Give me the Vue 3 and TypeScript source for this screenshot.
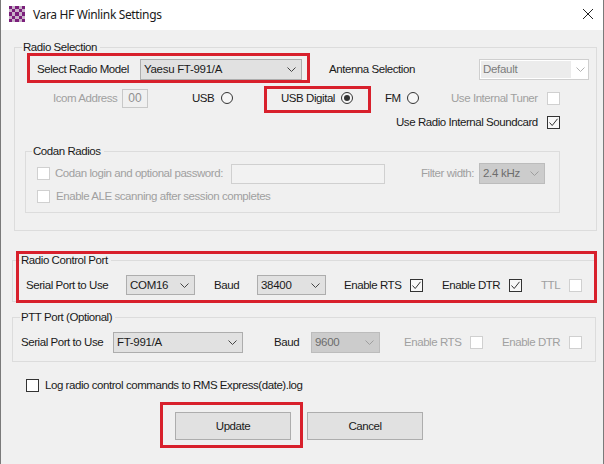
<script setup lang="ts">
const checker = Array.from({ length: 25 }, (_, i) => i).filter((i) => i % 2 === 0)
</script>

<template>
  <div class="win">
    <header class="title">
      <svg class="logo" width="16" height="16" viewBox="0 0 5 5" shape-rendering="crispEdges">
        <rect width="5" height="5" fill="#c9b4c9" />
        <rect v-for="i in checker" :key="i" :x="i % 5" :y="Math.floor(i / 5)" width="1" height="1" fill="#7b1f7b" />
      </svg>
      <span class="title-text">Vara HF Winlink Settings</span>
      <svg class="close" width="12" height="12" viewBox="0 0 12 12"><path d="M1 1 11 11M11 1 1 11" stroke="#222" stroke-width="1" fill="none" /></svg>
    </header>

    <section class="group radio-group">
      <span class="legend lg-radio">Radio Selection</span>
      <div class="row r-model">
        <span class="w-103">Select Radio Model</span>
        <div class="combo w-162"><span>Yaesu FT-991/A</span><svg class="chev" width="9" height="5" viewBox="0 0 9 5"><path d="M.5.5 4.5 4.500 8.500.5" /></svg></div>
        <span class="w-150 ml-27">Antenna Selection</span>
        <div class="combo-light"><span class="cl-text">Default</span><svg class="chev" width="9" height="5" viewBox="0 0 9 5"><path d="M.5.5 4.5 4.500 8.500.5" /></svg></div>
      </div>
      <div class="row r-mode">
        <span class="off w-69">Icom Address</span>
        <div class="addr">00</div>
        <span class="w-29 ml-44">USB</span><i class="radio"></i>
        <span class="w-60 ml-48">USB Digital</span><i class="radio on"></i>
        <span class="w-22 ml-32">FM</span><i class="radio"></i>
        <span class="off w-96 ml-32">Use Internal Tuner</span><i class="check"></i>
      </div>
      <div class="row r-sound">
        <span class="w-151">Use Radio Internal Soundcard</span>
        <i class="check on"><svg width="11" height="11" viewBox="0 0 11 11"><path d="M1.500 5.500 4.200 8.500 9.500 1.800" /></svg></i>
      </div>

      <section class="group codan">
        <span class="legend lg-codan">Codan Radios</span>
        <div class="row r-codan1">
          <i class="check"></i>
          <span class="off w-176 ml-5">Codan login and optional password:</span>
          <div class="pw"></div>
          <span class="off w-58 ml-36">Filter width:</span>
          <div class="combo combo-off w-66"><span>2.4 kHz</span><svg class="chev" width="9" height="5" viewBox="0 0 9 5"><path d="M.5.5 4.5 4.500 8.500.5" /></svg></div>
        </div>
        <div class="row r-codan2">
          <i class="check"></i>
          <span class="off ml-6">Enable ALE scanning after session completes</span>
        </div>
      </section>
    </section>

    <section class="group port control">
      <span class="legend lg-port">Radio Control Port</span>
      <div class="row r-control">
        <span class="w-100">Serial Port to Use</span>
        <div class="combo w-69"><span>COM16</span><svg class="chev" width="9" height="5" viewBox="0 0 9 5"><path d="M.5.5 4.5 4.500 8.500.5" /></svg></div>
        <span class="w-43 ml-19">Baud</span>
        <div class="combo w-69"><span>38400</span><svg class="chev" width="9" height="5" viewBox="0 0 9 5"><path d="M.5.5 4.5 4.500 8.500.5" /></svg></div>
        <span class="w-66 ml-18">Enable RTS</span>
        <i class="check on"><svg width="11" height="11" viewBox="0 0 11 11"><path d="M1.500 5.500 4.200 8.500 9.500 1.800" /></svg></i>
        <span class="w-67 ml-19">Enable DTR</span>
        <i class="check on"><svg width="11" height="11" viewBox="0 0 11 11"><path d="M1.500 5.500 4.200 8.500 9.500 1.800" /></svg></i>
        <span class="off w-28 ml-19">TTL</span><i class="check"></i>
      </div>
    </section>

    <section class="group port ptt">
      <span class="legend lg-port">PTT Port (Optional)</span>
      <div class="row r-ptt">
        <span class="w-92">Serial Port to Use</span>
        <div class="combo w-130"><span>FT-991/A</span><svg class="chev" width="9" height="5" viewBox="0 0 9 5"><path d="M.5.5 4.5 4.500 8.500.5" /></svg></div>
        <span class="w-37 ml-31">Baud</span>
        <div class="combo combo-off w-69"><span>9600</span><svg class="chev" width="9" height="5" viewBox="0 0 9 5"><path d="M.5.5 4.5 4.500 8.500.5" /></svg></div>
        <span class="off w-66 ml-24">Enable RTS</span><i class="check"></i>
        <span class="off w-67 ml-19">Enable DTR</span><i class="check"></i>
      </div>
    </section>

    <div class="row r-log">
      <i class="check"></i>
      <span class="ml-6">Log radio control commands to RMS Express(date).log</span>
    </div>

    <div class="buttons">
      <button class="btn">Update</button>
      <button class="btn">Cancel</button>
    </div>

    <div class="mark m1"></div>
    <div class="mark m2"></div>
    <div class="mark m3"></div>
    <div class="mark m4"></div>
  </div>
</template>

<style scoped>
.win {
  position: relative;
  box-sizing: border-box;
  width: 604px;
  height: 464px;
  overflow: hidden;
  background: #f0f0f0;
  border-left: 1px solid #7a7a7a;
  border-right: 1px solid #7a7a7a;
  color: #1a1a1a;
  font: 11.5px/13px "Liberation Sans", Arial, sans-serif;
  letter-spacing: -0.44px;
}
.title {
  display: flex;
  align-items: center;
  height: 30px;
  padding: 0 9px 0 8px;
  background: #fff;
}
.logo { margin-top: -2px; }
.title-text {
  flex: 1;
  margin-left: 8px;
  font: 12px/16px "Noto Sans", "Liberation Sans", sans-serif;
  letter-spacing: -0.35px;
}
.close { margin-top: -2px; }
.row { display: flex; align-items: center; white-space: nowrap; }
.row > span { flex: none; }
.group {
  position: relative;
  box-sizing: border-box;
  border: 1px solid #dcdcdc;
}
.legend {
  position: absolute;
  top: -7px;
  padding: 0 3px 0 1px;
  background: #f0f0f0;
}
.lg-radio { left: 7px; }
.lg-codan { left: 6px; }
.lg-port { left: 7px; }
.radio-group {
  width: 583px;
  height: 184px;
  margin: 17px 0 0 13px;
}
.r-model { height: 21px; margin-top: 11px; padding-left: 22px; }
.r-mode { height: 20px; margin-top: 8px; padding-left: 38px; }
.r-sound { height: 14px; margin-top: 7px; padding-left: 381px; }
.codan {
  width: 535px;
  height: 62px;
  margin: 22px 0 0 10px;
}
.r-codan1 { height: 21px; margin-top: 11px; padding-left: 11px; }
.r-codan2 { height: 13px; margin-top: 6px; padding-left: 11px; }
.port { width: 584px; margin-left: 11px; }
.control { height: 42px; margin-top: 29px; }
.r-control { height: 20px; margin-top: 14px; padding-left: 13px; }
.r-control .combo { height: 20px; }
.ptt { height: 45px; margin-top: 15px; }
.r-ptt { height: 21px; margin-top: 14px; padding-left: 8px; }
.r-log { height: 13px; margin: 17px 0 0 25px; }
.buttons {
  display: flex;
  gap: 16px;
  margin: 20px 0 0 174px;
}
.btn {
  box-sizing: border-box;
  width: 116px;
  height: 28px;
  padding: 0;
  border: 1px solid #adadad;
  border-radius: 0;
  background: #e1e1e1;
  color: inherit;
  font: inherit;
  letter-spacing: inherit;
}
.off { color: #a0a0a0; }
.combo {
  box-sizing: border-box;
  display: flex;
  flex: none;
  align-items: center;
  justify-content: space-between;
  height: 21px;
  padding: 0 5px 0 3px;
  border: 1px solid #adadad;
  background: #e1e1e1;
  font-size: 11.5px;
  letter-spacing: -0.3px;
}
.combo-off {
  border-color: #bcbcbc;
  background: #cccccc;
  color: #6d6d6d;
}
.combo-off .chev path { stroke: #9e9e9e; }
.chev path { fill: none; stroke: #444; stroke-width: 1; }
.combo-light {
  box-sizing: border-box;
  display: flex;
  align-items: center;
  width: 110px;
  height: 21px;
  padding: 1px 3px 1px 1px;
  border: 1px solid #cfcfcf;
  background: #fff;
}
.cl-text {
  flex: 1;
  align-self: stretch;
  margin-right: 5px;
  padding-left: 2px;
  line-height: 17px;
  background: #ececec;
  color: #7d7d7d;
  font-size: 11.5px;
  letter-spacing: -0.3px;
}
.combo-light .chev path { stroke: #b0b0b0; }
.addr {
  box-sizing: border-box;
  width: 26px;
  height: 19px;
  border: 1px solid #c8c8c8;
  color: #8f8f8f;
  font-size: 12px;
  letter-spacing: 0;
  line-height: 17px;
  text-align: center;
}
.pw {
  box-sizing: border-box;
  width: 154px;
  height: 20px;
  border: 1px solid #d0d0d0;
  background: #f2f2f2;
}
.radio {
  box-sizing: border-box;
  display: flex;
  flex: none;
  align-items: center;
  justify-content: center;
  width: 12px;
  height: 12px;
  border: 1px solid #333;
  border-radius: 50%;
  background: #f6f6f6;
}
.radio.on::after {
  content: "";
  width: 6px;
  height: 6px;
  border-radius: 50%;
  background: #333;
}
.check {
  box-sizing: border-box;
  display: flex;
  flex: none;
  align-items: center;
  justify-content: center;
  width: 13px;
  height: 13px;
  border: 1px solid #d0d0d0;
  background: #fff;
}
.check.on, .r-log .check { border-color: #333; }
.check.on { background: #f8f8f8; }
.check path { fill: none; stroke: #333; stroke-width: 1; }
.w-22 { width: 22px; } .w-28 { width: 28px; } .w-29 { width: 29px; } .w-37 { width: 37px; }
.w-43 { width: 43px; } .w-58 { width: 58px; } .w-60 { width: 60px; } .w-66 { width: 66px; }
.w-67 { width: 67px; } .w-69 { width: 69px; } .w-92 { width: 92px; } .w-96 { width: 96px; }
.w-100 { width: 100px; } .w-103 { width: 103px; } .w-130 { width: 130px; } .w-150 { width: 150px; }
.w-151 { width: 151px; } .w-162 { width: 162px; } .w-176 { width: 176px; }
.ml-5 { margin-left: 5px; } .ml-6 { margin-left: 6px; } .ml-18 { margin-left: 18px; }
.ml-19 { margin-left: 19px; } .ml-24 { margin-left: 24px; } .ml-27 { margin-left: 27px; }
.ml-31 { margin-left: 31px; } .ml-32 { margin-left: 32px; } .ml-36 { margin-left: 36px; }
.ml-44 { margin-left: 44px; } .ml-48 { margin-left: 48px; }
.mark {
  position: absolute;
  box-sizing: border-box;
  border: 3px solid #d8202c;
}
.m1 { left: 26px; top: 53px; width: 283px; height: 30px; }
.m2 { left: 263px; top: 86px; width: 107px; height: 27px; }
.m3 { left: 15px; top: 251px; width: 581px; height: 52px; }
.m4 { left: 159px; top: 402px; width: 143px; height: 46px; }
</style>
